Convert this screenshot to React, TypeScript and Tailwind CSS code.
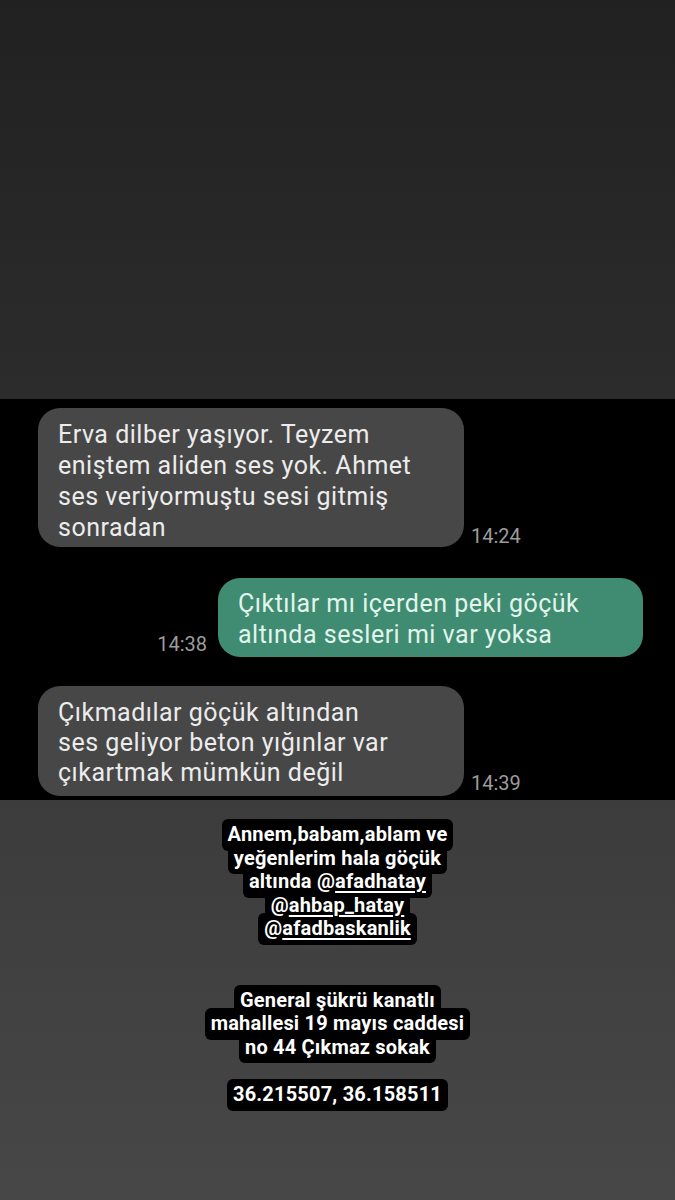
import React from 'react';

const chatFont = { fontFamily: 'Roboto, "Noto Sans", sans-serif' };

function Handle({ name }: { name: string }) {
  return (
    <>
      @<span className="underline decoration-2 underline-offset-[3px]">{name}</span>
    </>
  );
}

// story text: one black box per line, text lifted above the boxes so descenders stay visible
function Caption({ lines }: { lines: React.ReactNode[] }) {
  return (
    <div className="flex flex-col items-center text-[20px] leading-[23.5px] font-bold tracking-[0.2px] text-white whitespace-nowrap">
      {lines.map((line, i) => (
        <div key={i} className={`bg-black px-[6px] py-[4px] rounded-[6px] ${i > 0 ? '-mt-[8px]' : ''}`}>
          <span className="relative z-10">{line}</span>
        </div>
      ))}
    </div>
  );
}

export default function App() {
  return (
    <div className="w-[675px] h-[1200px] flex flex-col overflow-hidden" style={chatFont}>
      <div className="h-[399px] bg-gradient-to-b from-[#212121] to-[#2c2c2c]" />

      <div className="h-[401px] bg-black pt-[9px] flex flex-col">
        <div className="flex items-end pl-[38px] gap-[7px]">
          <div className="w-[426px] h-[139px] bg-[#474747] rounded-[22px] pl-[20px] pt-[11px] text-[25px] tracking-[0.5px] leading-[31px] text-[#ececec]">
            Erva dilber yaşıyor. Teyzem
            <br />
            eniştem aliden ses yok. Ahmet
            <br />
            ses veriyormuştu sesi gitmiş
            <br />
            sonradan
          </div>
          <span className="text-[20px] leading-[20px] text-[#9c9c9c] mb-[1px]">14:24</span>
        </div>

        <div className="flex items-end justify-end pr-[32px] gap-[11px] mt-[31px]">
          <span className="text-[20px] leading-[20px] text-[#9c9c9c] mb-[3px]">14:38</span>
          <div className="w-[425px] h-[79px] bg-[#3f8c72] rounded-[22px] pl-[20px] pt-[10px] text-[25px] tracking-[0.5px] leading-[31px] text-[#e2f5ec]">
            Çıktılar mı içerden peki göçük
            <br />
            altında sesleri mi var yoksa
          </div>
        </div>

        <div className="flex items-end pl-[38px] gap-[7px] mt-[29px]">
          <div className="w-[426px] h-[110px] bg-[#474747] rounded-[22px] pl-[20px] pt-[12px] text-[25px] tracking-[0.5px] leading-[30px] text-[#ececec]">
            Çıkmadılar göçük altından
            <br />
            ses geliyor beton yığınlar var
            <br />
            çıkartmak mümkün değil
          </div>
          <span className="text-[20px] leading-[20px] text-[#9c9c9c] mb-[3px]">14:39</span>
        </div>
      </div>

      <div className="flex-1 bg-gradient-to-b from-[#3c3c3c] to-[#474747] pt-[19px] flex flex-col items-center">
        <Caption
          lines={[
            'Annem,babam,ablam ve',
            'yeğenlerim hala göçük',
            <>
              altında <Handle name="afadhatay" />
            </>,
            <Handle name="ahbap_hatay" />,
            <Handle name="afadbaskanlik" />,
          ]}
        />
        <div className="h-[40px]" />
        <Caption lines={['General şükrü kanatlı', 'mahallesi 19 mayıs caddesi', 'no 44 Çıkmaz sokak']} />
        <div className="h-[16px]" />
        <Caption lines={['36.215507, 36.158511']} />
      </div>
    </div>
  );
}
